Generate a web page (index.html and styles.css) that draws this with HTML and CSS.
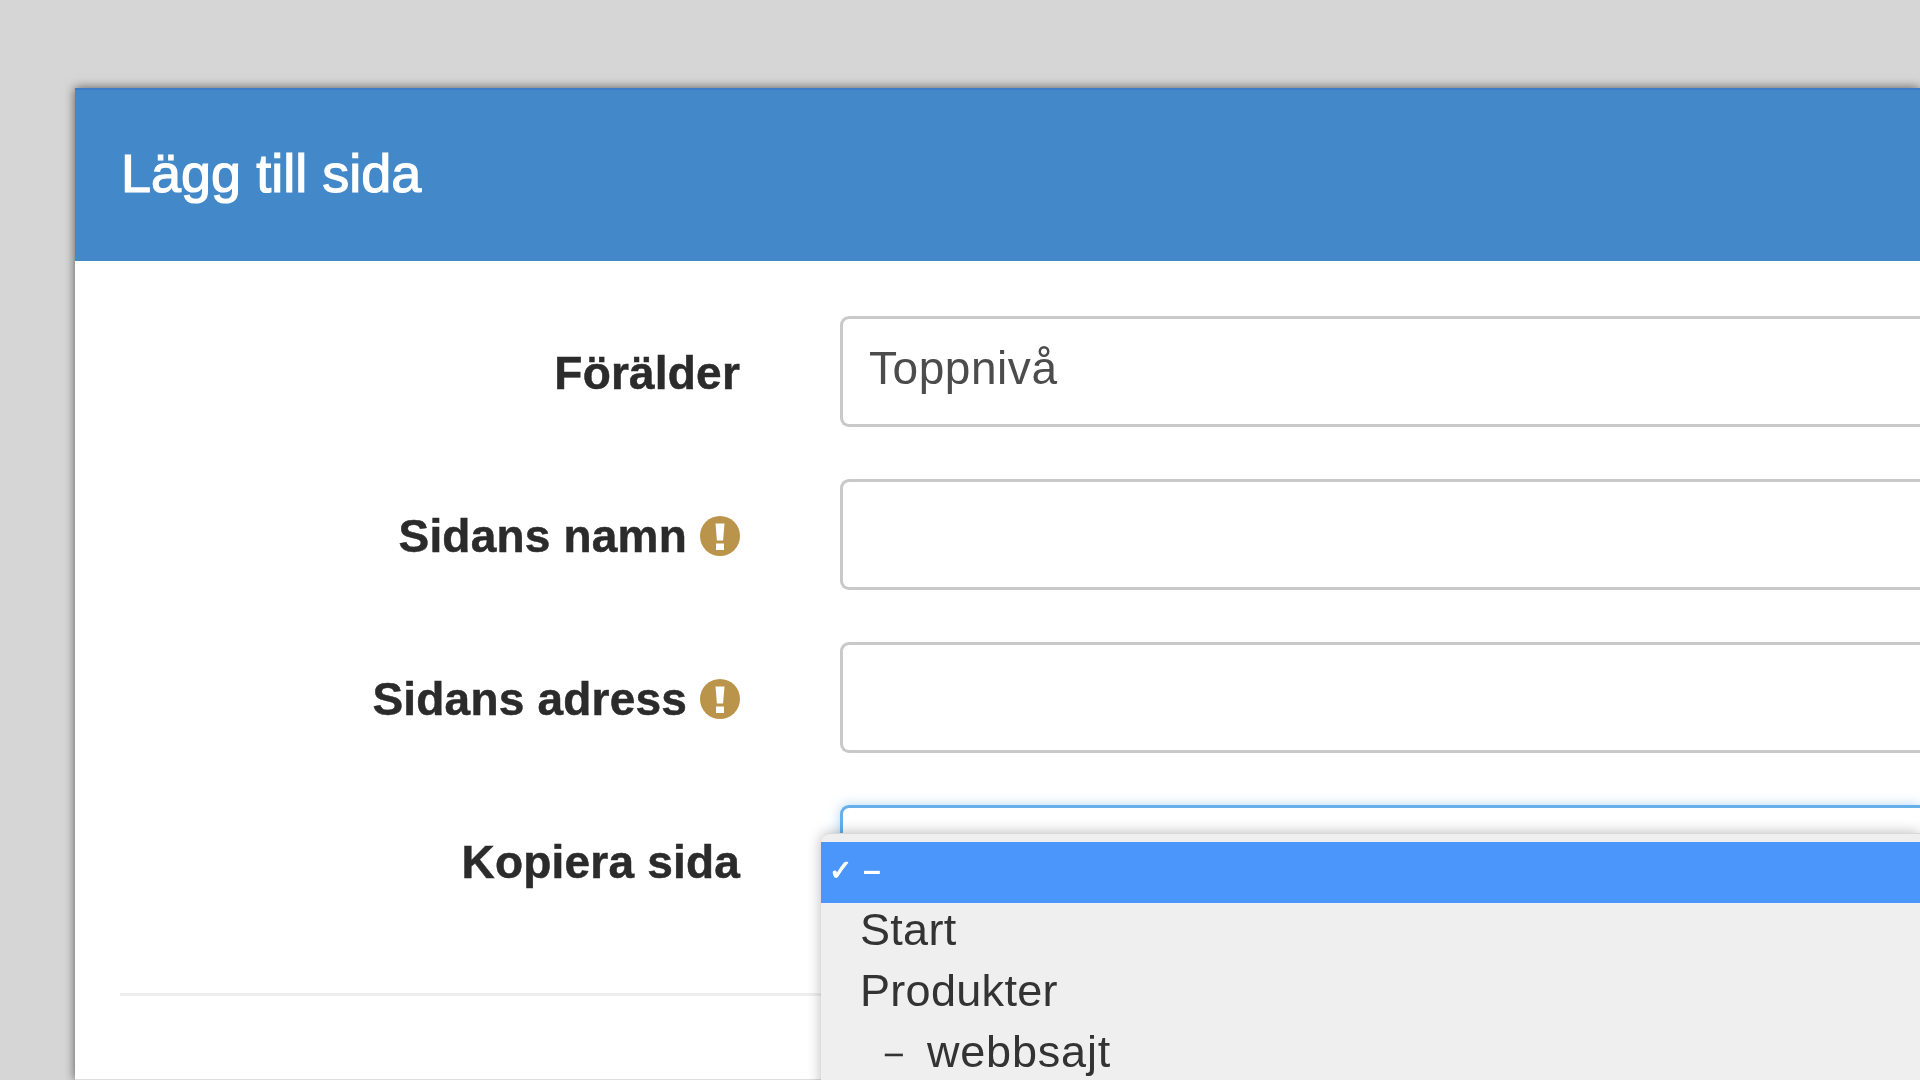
FILE: index.html
```html
<!DOCTYPE html>
<html lang="sv">
<head>
<meta charset="utf-8">
<title>Lägg till sida</title>
<link rel="stylesheet" href="styles.css">
</head>
<body>
<main class="modal">
  <header class="modal-header"><h1 class="modal-title">Lägg till sida</h1></header>
  <form class="modal-body">
    <div class="row">
      <label class="label">Förälder</label>
      <div class="field"><span class="value">Toppnivå</span></div>
    </div>
    <div class="row">
      <label class="label">Sidans namn
        <svg class="warn" viewBox="0 0 40 40" aria-hidden="true"><circle cx="20" cy="20" r="20" fill="#bb944b"/><path d="M15.5 7.5h9l-1.4 17h-6.2z" fill="#fff"/><rect x="16" y="27.5" width="8" height="6.5" fill="#fff"/></svg>
      </label>
      <div class="field"></div>
    </div>
    <div class="row">
      <label class="label">Sidans adress
        <svg class="warn" viewBox="0 0 40 40" aria-hidden="true"><circle cx="20" cy="20" r="20" fill="#bb944b"/><path d="M15.5 7.5h9l-1.4 17h-6.2z" fill="#fff"/><rect x="16" y="27.5" width="8" height="6.5" fill="#fff"/></svg>
      </label>
      <div class="field"></div>
    </div>
    <div class="row">
      <label class="label">Kopiera sida</label>
      <div class="field field-focus">
        <ul class="menu">
          <li class="option selected"><span class="check">✓</span><span class="dash">–</span></li>
          <li class="option">Start</li>
          <li class="option">Produkter</li>
          <li class="option sub"><span class="sub-dash">–</span>webbsajt</li>
        </ul>
      </div>
    </div>
    <hr class="rule">
  </form>
</main>
</body>
</html>
```

FILE: styles.css
```css
* { box-sizing: border-box; }
html, body { margin: 0; height: 100%; overflow: hidden; }
body {
  background: #d6d6d6;
  font-family: "Liberation Sans", Arial, sans-serif;
  color: #2b2b2b;
  padding: 88px 0 0 75px;
}
.modal {
  height: 992px;
  background: #fff;
  box-shadow: 0 0 10px rgba(0, 0, 0, .6);
  border-bottom: 1px solid #dedede;
  filter: blur(.5px);
}
.modal-header {
  height: 173px;
  background: #4388c8;
  border-top: 2px solid #3f7cc8;
  display: flex;
  align-items: center;
  padding-left: 46px;
}
.modal-title {
  margin: 0 0 5px;
  font-size: 54px;
  font-weight: 400;
  color: #fff;
  line-height: 1;
  -webkit-text-stroke: 1.2px #fff;
}
.modal-body {
  padding: 55px 0 0 45px;
  display: flex;
  flex-direction: column;
}
.row {
  display: flex;
  align-items: center;
  height: 111px;
  margin-bottom: 52px;
}
.label {
  width: 620px;
  flex: none;
  display: flex;
  justify-content: flex-end;
  align-items: center;
  gap: 13px;
  font-size: 46px;
  font-weight: 700;
  letter-spacing: .2px;
  line-height: 1;
  position: relative;
  top: 1px;
  white-space: nowrap;
  -webkit-text-stroke: .5px #2b2b2b;
}
.warn { width: 40px; height: 40px; flex: none; }
.field {
  flex: 1;
  margin-left: 100px;
  height: 111px;
  border: 3px solid #c9c9c9;
  border-right: 0;
  border-radius: 9px 0 0 9px;
  background: #fff;
  display: flex;
  align-items: center;
  padding-left: 26px;
  position: relative;
}
.value {
  font-size: 46px;
  letter-spacing: .55px;
  color: #4c4c4c;
  position: relative;
  top: -4px;
}
.field-focus {
  border-color: #66afe9;
  box-shadow: 0 0 12px rgba(102, 175, 233, .5);
}
.menu {
  position: absolute;
  left: -22px;
  right: 0;
  top: 25px;
  height: 300px;
  margin: 0;
  padding: 8px 0 0;
  list-style: none;
  background: #efefef;
  border-top: 1px solid #d8d8d8;
  border-radius: 9px 0 0 0;
  box-shadow: 0 0 14px rgba(0, 0, 0, .28);
  z-index: 2;
}
.option {
  height: 61px;
  padding-left: 39px;
  font-size: 45px;
  letter-spacing: .3px;
  line-height: 53px;
  color: #333;
  white-space: nowrap;
}
.option.selected {
  background: #4a96fb;
  color: #fff;
  padding-left: 8px;
  display: flex;
  align-items: center;
}
.check {
  width: 34px;
  font-family: "DejaVu Sans", sans-serif;
  font-size: 28px;
  line-height: 1;
  position: relative;
  top: -2px;
  -webkit-text-stroke: 1px #fff;
}
.dash {
  font-size: 32px;
  font-weight: 700;
  line-height: 1;
  position: relative;
  top: -3px;
}
.sub { padding-left: 64px; letter-spacing: .8px; }
.sub-dash {
  display: inline-block;
  width: 42px;
  font-size: 32px;
  line-height: 1;
  position: relative;
  top: -4px;
  -webkit-text-stroke: .4px #333;
}
.rule {
  margin: 25px 0 0;
  height: 3px;
  border: 0;
  background: #eeeeee;
}
```
